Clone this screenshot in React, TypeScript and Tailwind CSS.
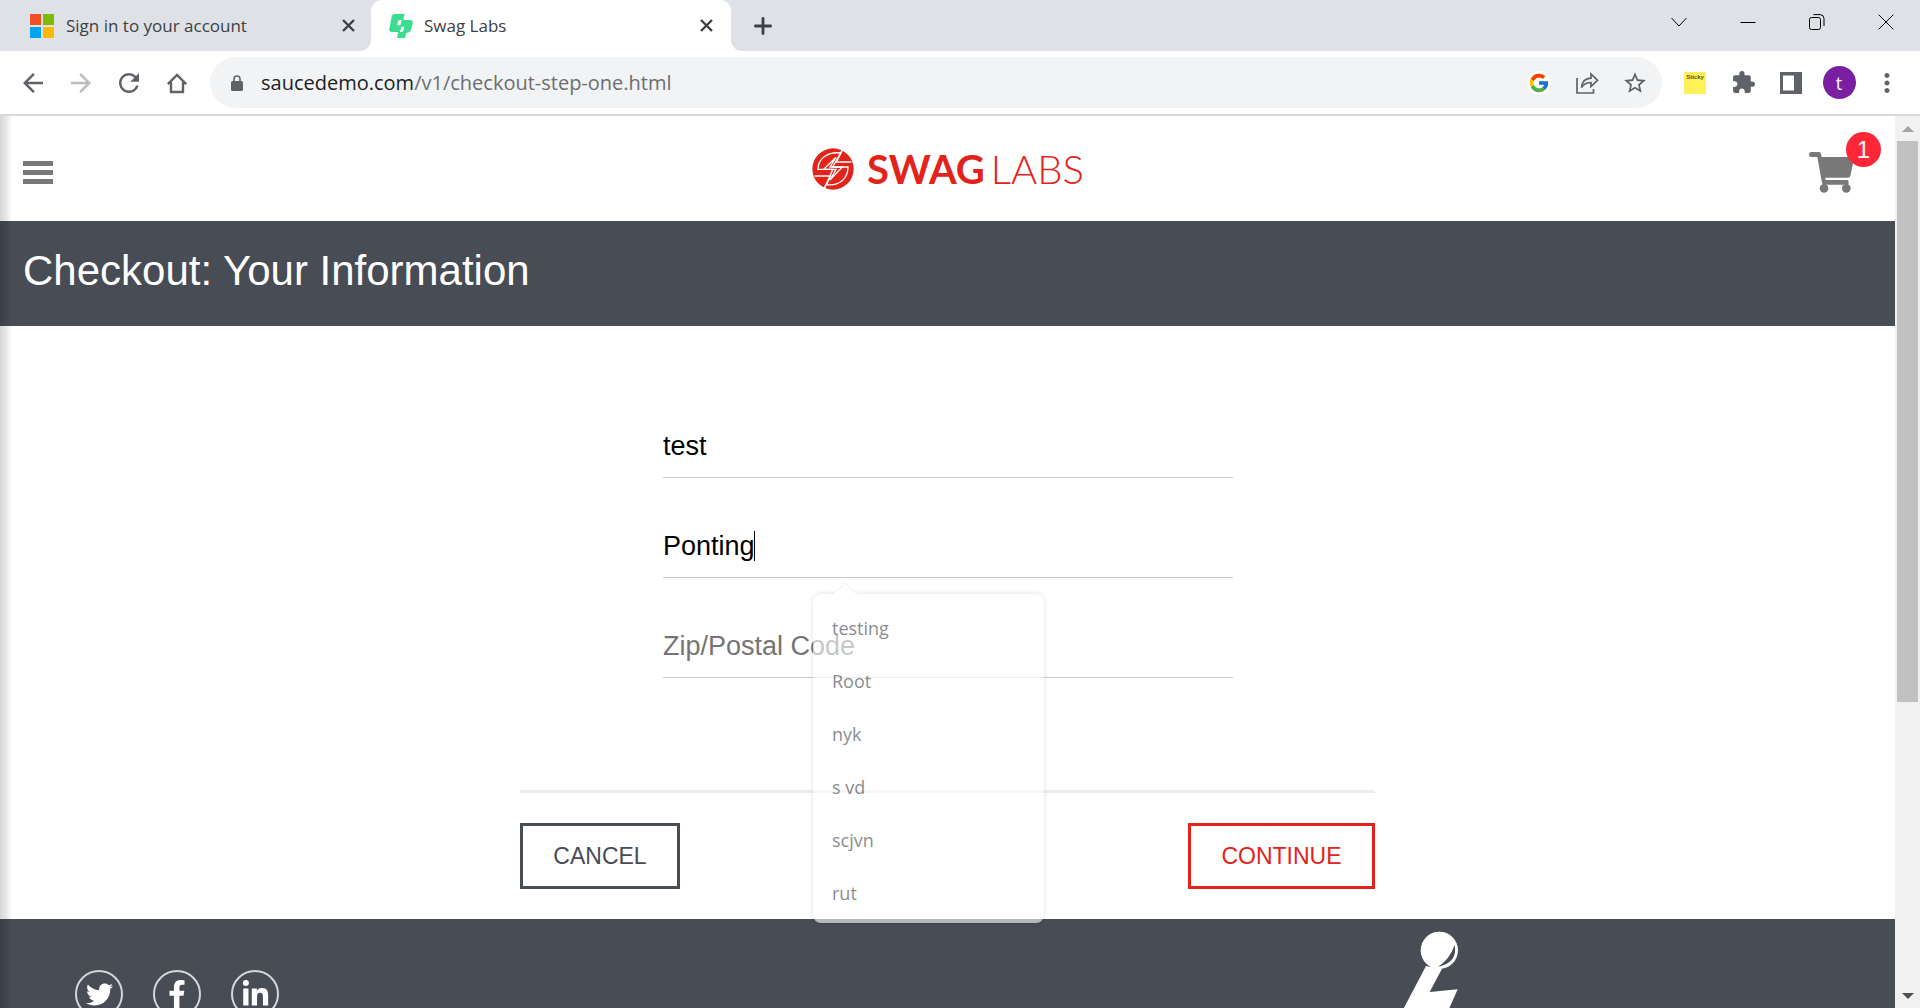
import React from 'react';
import { MdArrowBack, MdArrowForward, MdRefresh, MdStarBorder, MdExtension, MdMoreVert } from 'react-icons/md';
import { FcGoogle } from 'react-icons/fc';
import { FaTwitter, FaFacebookF, FaLinkedinIn } from 'react-icons/fa';

const suggestions = ['testing', 'Root', 'nyk', 's vd', 'scjvn', 'rut'];

function MicrosoftIcon() {
  return (
    <svg width="24" height="24" viewBox="0 0 24 24" aria-hidden="true">
      <path fill="#f25022" d="M0 0h11v11H0z" />
      <path fill="#7fba00" d="M13 0h11v11H13z" />
      <path fill="#00a4ef" d="M0 13h11v11H0z" />
      <path fill="#ffb900" d="M13 13h11v11H13z" />
    </svg>
  );
}

function SwagIcon() {
  return (
    <svg width="24" height="24" viewBox="0 0 72 72" aria-hidden="true">
      <path
        fill="#3ddc91"
        d="M17 0H47L43 18H33Q28 18 27 23L25 34H34L38 18H64Q73 18 71 27L66 49Q64 56 56 56H52L48 72H24L28 54H37Q43 54 44 49L46 38H37L33 54H8Q-1 53 1 45L8 7Q10 0 17 0Z"
      />
    </svg>
  );
}

function TabCloseIcon() {
  return (
    <svg width="13" height="13" viewBox="0 0 13 13" stroke="#3c4043" strokeWidth="2.400" aria-hidden="true">
      <path d="m1 1 11 11M12 1 1 12" />
    </svg>
  );
}

function LockIcon() {
  return (
    <svg width="12" height="16" viewBox="0 0 12 16" className="shrink-0" aria-hidden="true">
      <path fill="none" stroke="#5f6368" strokeWidth="1.600" d="M3 7V4a3 3 0 0 1 6 0v3" />
      <rect y="6" width="12" height="10" rx="1.500" fill="#5f6368" />
    </svg>
  );
}

function HomeIcon() {
  return (
    <svg width="24" height="24" viewBox="0 0 24 24" fill="none" stroke="#5f6368" strokeWidth="2.4" aria-hidden="true">
      <path d="M2.8 13.2 12 4l9.200 9.200M6 11v10h12V11" />
    </svg>
  );
}

function ShareIcon() {
  return (
    <svg width="24" height="24" viewBox="0 0 24 24" fill="none" stroke="#5f6368" strokeWidth="1.7" aria-hidden="true">
      <path d="M2 7v15h16.500v-4" />
      <path strokeLinejoin="miter" d="M6.500 16.500C7 10.500 10.500 7.500 16 7.200V3l6.500 6.300L16 15.500v-4C11.500 11.500 8.800 13 6.500 16.500Z" />
    </svg>
  );
}

function SwagLogo() {
  return (
    <svg width="42" height="42" viewBox="0 0 126 126" aria-hidden="true">
      <circle cx="63" cy="63" r="62" fill="#e2231a" />
      <g fill="none" stroke="#fff" strokeLinejoin="miter">
        <path strokeWidth="5" d="M94 0 73 42H118M34 126 55 84H8" />
        <path strokeWidth="4" d="M86 15C50 10 18 30 18 64H62L44 110C82 114 108 92 108 57H62L86 15" />
        <path strokeWidth="4" d="M72 28 35 64H72L54 96 91 57H54Z" />
      </g>
    </svg>
  );
}

function CartIcon() {
  return (
    <svg width="46" height="42" viewBox="0 0 138 126" fill="#787878" aria-hidden="true">
      <path d="M6 0H30Q35 0 36 5L38 15H136L124 72Q122 77 117 77H49L50 84H114Q119 84 119 89L118 98H46Q40 98 39 92L25 15H6Q0 15 0 8Q0 0 6 0Z" />
      <circle cx="45" cy="109" r="13" />
      <circle cx="112" cy="109" r="13" />
    </svg>
  );
}

function RobotArm() {
  return (
    <svg width="80" height="89" viewBox="0 0 240 267" className="block" aria-hidden="true">
      <path fill="#fff" d="M78 138 126 146 89 216 173 208 147 267H10Z" />
      <circle cx="118" cy="91" r="56" fill="#fff" />
      <path fill="#484c55" d="M164 75Q174 128 114 140Q148 120 164 75Z" />
    </svg>
  );
}

function Cell({ label, children }: { label: string; children: React.ReactNode }) {
  return (
    <button type="button" aria-label={label} className="flex h-12 w-12 shrink-0 items-center justify-center text-[#5f6368]">
      {children}
    </button>
  );
}

function WindowButton({ label, d }: { label: string; d: string }) {
  return (
    <button type="button" aria-label={label} className="flex h-[43px] w-[69px] items-center justify-center">
      <svg width="16" height="16" viewBox="0 0 16 16" fill="none" stroke="#000" strokeWidth="1">
        <path d={d} />
      </svg>
    </button>
  );
}

function TabStrip() {
  return (
    <div className="flex h-[51px] shrink-0 bg-[#dee1e6] text-[17px] text-[#3c4043]">
      <div className="flex h-full w-[371px] items-center pr-[11px] pl-[30px]">
        <MicrosoftIcon />
        <span className="ml-3 flex-1 pt-px">Sign in to your account</span>
        <button type="button" aria-label="Close tab" className="flex h-6 w-6 items-center justify-center">
          <TabCloseIcon />
        </button>
      </div>
      <div className="relative flex h-full w-[360px] items-center rounded-t-[11px] bg-white pr-[13px] pl-[18px]">
        <span className="absolute bottom-0 -left-[11px] h-[11px] w-[11px] bg-white">
          <span className="block h-full rounded-br-[11px] bg-[#dee1e6]" />
        </span>
        <span className="absolute -right-[11px] bottom-0 h-[11px] w-[11px] bg-white">
          <span className="block h-full rounded-bl-[11px] bg-[#dee1e6]" />
        </span>
        <SwagIcon />
        <span className="ml-[11px] flex-1 pt-px">Swag Labs</span>
        <button type="button" aria-label="Close tab" className="flex h-6 w-6 items-center justify-center">
          <TabCloseIcon />
        </button>
      </div>
      <button type="button" aria-label="New tab" className="ml-5 flex h-full w-6 items-center justify-center">
        <svg width="18" height="18" viewBox="0 0 18 18" stroke="#3c4043" strokeWidth="2.800" strokeLinecap="round">
          <path d="M9 1.400v15.200M1.400 9h15.200" />
        </svg>
      </button>
      <div className="ml-auto flex">
        <WindowButton label="Search tabs" d="M.5 4 8 12l7.500-8" />
        <WindowButton label="Minimize" d="M.5 8.500h15" />
        <WindowButton label="Restore" d="M2.500 3.500h7a2 2 0 0 1 2 2v8a2 2 0 0 1-2 2h-7a2 2 0 0 1-2-2v-8a2 2 0 0 1 2-2ZM4.500.6H11a4 4 0 0 1 4 4V12" />
        <WindowButton label="Close" d="m.7.7 14.600 14.600M15.300.7.7 15.300" />
      </div>
    </div>
  );
}

function Toolbar() {
  return (
    <div className="flex h-[65px] shrink-0 items-center border-b-2 border-[#dadada] bg-white px-[9px]">
      <Cell label="Back"><MdArrowBack size={30} /></Cell>
      <Cell label="Forward"><MdArrowForward size={30} className="text-[#bbbcbe]" /></Cell>
      <Cell label="Reload"><MdRefresh size={30} /></Cell>
      <Cell label="Home"><HomeIcon /></Cell>
      <div className="mx-[9px] flex h-[51px] flex-1 items-center rounded-full bg-[#f1f3f4] pr-[3px] pl-[21px]">
        <LockIcon />
        <p className="ml-[18px] flex-1 text-xl text-[#6b6e72]">
          <span className="text-[#202124]">saucedemo.com</span>/v1/checkout-step-one.html
        </p>
        <Cell label="Search with Google">
          <span className="flex h-6 w-6 items-center justify-center rounded-full bg-white"><FcGoogle size={22} /></span>
        </Cell>
        <Cell label="Share"><ShareIcon /></Cell>
        <Cell label="Bookmark"><MdStarBorder size={26} /></Cell>
      </div>
      <Cell label="Sticky notes">
        <span className="flex h-[22px] w-[22px] justify-center bg-[#fff157] pt-px font-['Liberation_Sans'] text-[6px] leading-[8px] font-bold text-[#55511f]">Sticky</span>
      </Cell>
      <Cell label="Extensions"><MdExtension size={25} /></Cell>
      <Cell label="Side panel">
        <svg width="22" height="22" viewBox="0 0 22 22"><path fill="#5f6368" fillRule="evenodd" d="M0 0h22v22H0zM3 3.500v15h11v-15z" /></svg>
      </Cell>
      <Cell label="Profile">
        <span className="flex h-[33px] w-[33px] items-center justify-center rounded-full bg-[#7b1fa2] text-lg text-white">t</span>
      </Cell>
      <Cell label="Menu"><MdMoreVert size={30} /></Cell>
    </div>
  );
}

function Field({ label, value, children }: { label: string; value?: string; children?: React.ReactNode }) {
  return (
    <div className="relative">
      <input
        type="text"
        aria-label={label}
        placeholder={label}
        defaultValue={value}
        className="block h-16 w-full border-b border-[#cbcbcb] bg-transparent pt-0.5 text-[27px] text-black outline-none placeholder:text-[#757575]"
      />
      {children}
    </div>
  );
}

function Autofill() {
  return (
    <div className="absolute top-20 left-[150px] z-10 w-[231px] rounded-lg bg-white pt-[7px] pb-1 font-['Open_Sans',sans-serif] opacity-60 shadow-[0_0_5px_rgba(0,0,0,0.2)]">
      <svg width="28" height="13" viewBox="0 0 28 13" className="absolute -top-3 left-[18px]" aria-hidden="true">
        <path d="M1 13 14 1l13 12" fill="#fff" stroke="#e2e2e2" />
      </svg>
      <ul>
        {suggestions.map((s) => (
          <li key={s}>
            <button type="button" className="block h-[53px] w-full pl-[19px] text-left text-lg text-[#3c3f44]">{s}</button>
          </li>
        ))}
      </ul>
    </div>
  );
}

function ShopPage() {
  return (
    <div className="relative flex min-w-0 flex-1 flex-col bg-white font-['Liberation_Sans',sans-serif]">
      <div className="pointer-events-none absolute inset-y-0 left-0 z-20 w-3 bg-linear-to-r from-black/16 via-black/10 to-transparent" />
      <header className="flex h-[105px] shrink-0 items-center justify-between pr-[14px] pl-[23px]">
        <button type="button" aria-label="Open menu" className="flex w-[72px] flex-col gap-1 pt-[7px]">
          <span className="h-[5px] w-[30px] bg-[#787878]" />
          <span className="h-[5px] w-[30px] bg-[#787878]" />
          <span className="h-[5px] w-[30px] bg-[#787878]" />
        </button>
        <div className="flex items-center pr-2 font-['Lato',sans-serif] text-[40px] leading-none text-[#e2231a]">
          <SwagLogo />
          <span className="ml-[13px] font-bold">SWAG</span>
          <span className="ml-[6px] font-light">LABS</span>
        </div>
        <a href="#cart" aria-label="Cart" className="relative block h-[73px] w-[72px] pt-5">
          <CartIcon />
          <span className="absolute top-0 right-0 flex h-[35px] w-[35px] items-center justify-center rounded-full bg-[#ff2638] text-2xl text-white">1</span>
        </a>
      </header>
      <div className="flex h-[105px] shrink-0 items-center bg-[#484c55] px-[23px] pb-[5px]">
        <h1 className="text-[42px] leading-none text-white">Checkout: Your Information</h1>
      </div>
      <form className="mx-auto w-full max-w-[855px] shrink-0 pt-[88px] pb-[30px]">
        <div className="ml-[143px] flex w-2/3 flex-col gap-9">
          <Field label="First Name" value="test" />
          <Field label="Last Name" value="Ponting">
            <span className="absolute top-[17px] left-[91px] h-[30px] w-px bg-black" />
            <Autofill />
          </Field>
          <Field label="Zip/Postal Code" />
        </div>
        <div className="mt-28 flex justify-between border-t-[3px] border-[#ededee] pt-[30px] text-[23px]">
          <button type="button" className="h-[66px] w-40 border-[3px] border-[#484c55] text-[#484c55]">CANCEL</button>
          <button type="button" className="h-[66px] w-[187px] border-[3px] border-[#e2231a] text-[#e2231a]">CONTINUE</button>
        </div>
      </form>
      <footer className="flex flex-1 items-start justify-between bg-[#484c55] pt-px pr-[415px] pl-[75px] text-white">
        <ul className="flex gap-[30px] pt-[50px]">
          <li><a href="#twitter" aria-label="Twitter" className="flex h-12 w-12 items-center justify-center rounded-full border-2 border-[#d5d6d8]"><FaTwitter size={27} /></a></li>
          <li><a href="#facebook" aria-label="Facebook" className="flex h-12 w-12 items-center justify-center rounded-full border-2 border-[#d5d6d8]"><FaFacebookF size={28} /></a></li>
          <li><a href="#linkedin" aria-label="LinkedIn" className="flex h-12 w-12 items-center justify-center rounded-full border-2 border-[#d5d6d8]"><FaLinkedinIn size={29} /></a></li>
        </ul>
        <RobotArm />
      </footer>
    </div>
  );
}

function ScrollBar() {
  return (
    <div className="flex w-[25px] shrink-0 flex-col items-center bg-[#f1f1f1]">
      <div className="flex h-[25px] items-center">
        <svg width="12" height="6" viewBox="0 0 12 6"><path fill="#a3a3a3" d="M0 6 6 0l6 6z" /></svg>
      </div>
      <div className="w-[21px] flex-[561] bg-[#c1c1c1]" />
      <div className="flex-[281]" />
      <div className="flex h-[25px] items-center">
        <svg width="12" height="6" viewBox="0 0 12 6"><path fill="#505050" d="M0 0h12L6 6z" /></svg>
      </div>
    </div>
  );
}

export default function App() {
  return (
    <div className="flex h-screen flex-col overflow-hidden bg-white font-['Open_Sans',sans-serif]">
      <TabStrip />
      <Toolbar />
      <div className="flex min-h-0 flex-1 overflow-hidden">
        <ShopPage />
        <ScrollBar />
      </div>
    </div>
  );
}
